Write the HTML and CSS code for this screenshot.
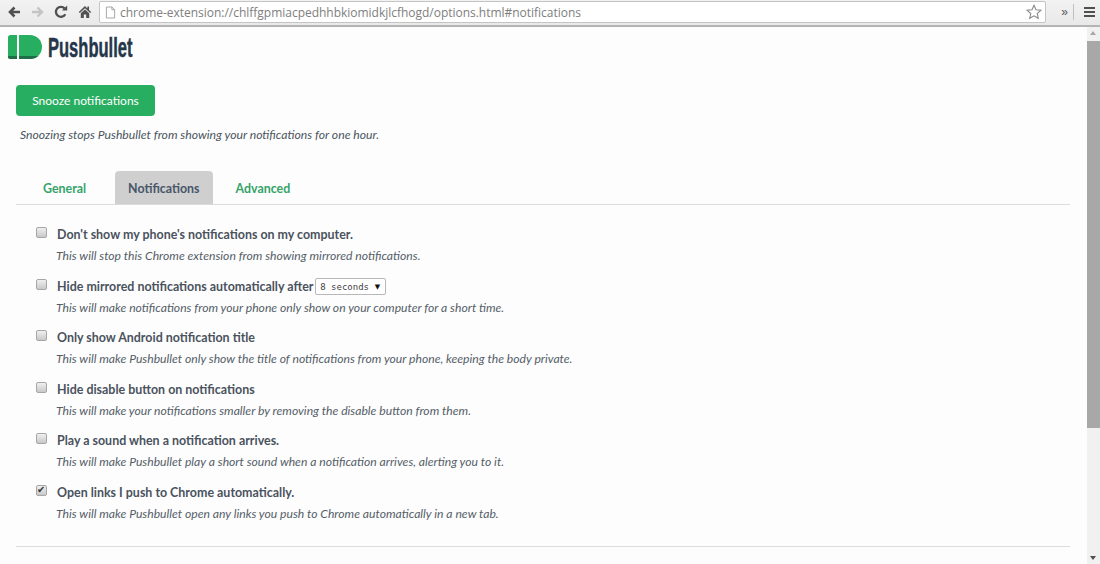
FILE: index.html
```html
<!DOCTYPE html>
<html lang="en">
<head>
<meta charset="utf-8">
<title>Pushbullet options</title>
<link rel="stylesheet" href="styles.css">
</head>
<body>
<header class="toolbar">
  <svg class="nav back" viewBox="0 0 14 14"><path d="M13 7H4M7.500 2.500 3 7l4.500 4.500" fill="none" stroke="#505050" stroke-width="2.600"/></svg>
  <svg class="nav forward" viewBox="0 0 14 14"><path d="M1 7h9M6.500 2.500 11 7l-4.500 4.500" fill="none" stroke="#c4c4c4" stroke-width="2.400"/></svg>
  <svg class="nav reload" viewBox="0 0 14 14"><path d="M11.300 9.200A5 5 0 1 1 10.600 3.400" fill="none" stroke="#505050" stroke-width="2.300"/><path d="M8 5.600h5.200V.6z" fill="#505050"/></svg>
  <svg class="nav home" viewBox="0 0 14 14"><path d="M7 1 .8 7l1 1L7 3.200 12.200 8l1-1-2.200-2.100V1.600H9.400v1.800zM2.800 8.300V13h3V9.400h2.400V13h3V8.300L7 4.500z" fill="#505050"/></svg>
  <div class="omnibox">
    <svg class="page-icon" viewBox="0 0 12 14"><path d="M1.500 1h6l3 3v9h-9zM7.500 1v3h3" fill="#fff" stroke="#a0a0a0"/></svg>
    <span class="url">chrome-extension://chlffgpmiacpedhhbkiomidkjlcfhogd/options.html#notifications</span>
    <svg class="star" viewBox="0 0 16 16"><path d="m8 1.300 2 4.500 4.900.5-3.700 3.200 1.100 4.800L8 11.800l-4.300 2.500 1.100-4.800L1.100 6.300 6 5.800z" fill="#fff" stroke="#8a8a8a" stroke-width="1.100"/></svg>
  </div>
  <span class="chevrons">»</span>
  <span class="divider"></span>
  <span class="menu"><i></i><i></i><i></i></span>
</header>
<div class="viewport">
  <main class="page">
    <div class="logo">
      <svg class="logo-mark" viewBox="0 0 34 24"><path d="M0 2.500A2.500 2.500 0 0 1 2.500 0H9v24H2.500A2.500 2.500 0 0 1 0 21.500z" fill="#27ae60"/><path d="M11 0h11a12 12 0 0 1 0 24H11z" fill="#27ae60"/><path d="M0 21h9v3H2.500A2.500 2.500 0 0 1 0 21.500zM11 21h19.500a12 12 0 0 1-8.500 3H11z" fill="#1e6f48"/></svg>
      <span class="logo-word">Pushbullet</span>
    </div>
    <button class="snooze" type="button">Snooze notifications</button>
    <p class="snooze-note">Snoozing stops Pushbullet from showing your notifications for one hour.</p>
    <nav class="tabs">
      <a class="tab">General</a>
      <a class="tab active">Notifications</a>
      <a class="tab">Advanced</a>
    </nav>
    <section class="options">
      <div class="option">
        <input type="checkbox">
        <div class="option-body">
          <div class="title">Don't show my phone's notifications on my computer.</div>
          <div class="desc">This will stop this Chrome extension from showing mirrored notifications.</div>
        </div>
      </div>
      <div class="option">
        <input type="checkbox">
        <div class="option-body">
          <div class="title">Hide mirrored notifications automatically after <span class="select">8 seconds<b>▼</b></span></div>
          <div class="desc">This will make notifications from your phone only show on your computer for a short time.</div>
        </div>
      </div>
      <div class="option">
        <input type="checkbox">
        <div class="option-body">
          <div class="title">Only show Android notification title</div>
          <div class="desc">This will make Pushbullet only show the title of notifications from your phone, keeping the body private.</div>
        </div>
      </div>
      <div class="option">
        <input type="checkbox">
        <div class="option-body">
          <div class="title">Hide disable button on notifications</div>
          <div class="desc">This will make your notifications smaller by removing the disable button from them.</div>
        </div>
      </div>
      <div class="option">
        <input type="checkbox">
        <div class="option-body">
          <div class="title">Play a sound when a notification arrives.</div>
          <div class="desc">This will make Pushbullet play a short sound when a notification arrives, alerting you to it.</div>
        </div>
      </div>
      <div class="option">
        <input type="checkbox" checked>
        <div class="option-body">
          <div class="title">Open links I push to Chrome automatically.</div>
          <div class="desc">This will make Pushbullet open any links you push to Chrome automatically in a new tab.</div>
        </div>
      </div>
    </section>
    <hr class="rule">
  </main>
  <aside class="scrollbar">
    <span class="arrow up"></span>
    <span class="thumb"></span>
    <span class="arrow down"></span>
  </aside>
</div>
</body>
</html>
```
FILE: styles.css
```css
* { box-sizing: border-box; }
html, body { margin: 0; height: 564px; overflow: hidden; }
body { font-family: Lato, "Open Sans", sans-serif; background: #fdfdfd; color: #414b56; }

.toolbar { height: 27px; display: flex; align-items: center; padding: 0 5px 1px 7px; background: linear-gradient(#f2f2f2, #e9e9e9); border-bottom: 2px solid #b4b4b4; }
.nav { width: 14px; height: 14px; flex: none; }
.forward { margin-left: 10px; }
.reload { margin-left: 9px; }
.home { margin-left: 10px; }
.omnibox { flex: 1; height: 22px; margin-left: 7px; display: flex; align-items: center; padding: 0 3px 0 5px; background: #fff; border: 1px solid #c4c4c4; border-radius: 2px; min-width: 0; }
.page-icon { width: 11px; height: 13px; flex: none; }
.url { flex: 1; margin-left: 4px; font-size: 12px; color: #7e7e7e; white-space: nowrap; font-family: "Open Sans", sans-serif; letter-spacing: -.02px; }
.star { width: 16px; height: 16px; flex: none; }
.chevrons { width: 27px; text-align: center; font: 12px "Liberation Sans", sans-serif; color: #555; padding-left: 10px; }
.divider { width: 1px; height: 16px; background: #c0c0c0; margin-right: 10px; }
.menu { width: 11px; display: flex; flex-direction: column; gap: 2px; }
.menu i { height: 2px; background: #505050; display: block; }

.viewport { height: 537px; display: flex; }
.page { flex: 1; min-width: 0; padding: 6px 17px 0 16px; }

.logo { display: flex; align-items: center; height: 30px; margin-left: -8px; gap: 6px; }
.logo-mark { width: 34px; height: 24px; flex: none; margin-top: -3px; }
.logo-word { flex: none; font: 700 28px/26px "Liberation Sans", sans-serif; color: #25364a; -webkit-text-stroke: .5px #25364a; transform: scaleX(.59); transform-origin: left center; margin-top: -1px; white-space: nowrap; }

.snooze { display: block; width: 139px; height: 31px; margin-top: 22px; padding: 0; background: #27ae60; color: #fff; border: 0; border-radius: 4px; font: 400 12px Lato, sans-serif; }
.snooze-note { margin: 11px 0 0 4px; font-size: 12.200px; line-height: 16px; font-style: italic; color: #4a5560; }

.tabs { display: flex; margin-top: 28px; height: 34px; border-bottom: 1px solid #dcdcdc; }
.tab { height: 33px; display: flex; align-items: center; padding: 1px 13px 0; font-size: 12.400px; font-weight: 700; color: #34a368; border-radius: 4px 4px 0 0; margin-right: 10px; }
.tab:first-child { margin-left: 14px; margin-right: 16px; }
.tab.active { background: #cfcfcf; color: #47566a; }

.options { padding: 19px 0 0 20px; }
.option { display: flex; height: 51.500px; }
.option input { appearance: none; width: 11px; height: 11px; margin: 3px 10px 0 0; flex: none; position: relative; background: linear-gradient(#f0f0f0, #c8c8c8); border: 1px solid #a6a6a6; border-radius: 2px; }
.option input:checked::after { content: "✔"; position: absolute; left: 0; top: -2px; font: 10px/12px "DejaVu Sans", sans-serif; color: #333; }
.option-body { min-width: 0; padding-left: 0; }
.title { font-size: 12.450px; font-weight: 700; line-height: 21px; height: 21px; color: #4a535d; white-space: nowrap; }
.desc { margin: 3px 0 0 -1px; font-size: 12.170px; font-style: italic; line-height: 16px; color: #555e68; white-space: nowrap; }
.select { display: inline-flex; align-items: center; justify-content: space-between; width: 71px; height: 17px; padding: 0 5px 0 4px; margin-left: -1px; vertical-align: 1px; background: #fff; border: 1px solid #b8b8b8; border-radius: 2px; font: 400 9px "DejaVu Sans Mono", monospace; color: #444; }
.select b { font: 7px "DejaVu Sans", sans-serif; color: #111; }

.rule { margin: 13px 0 0; height: 0; border: 0; border-top: 1px solid #dcdcdc; }

.scrollbar { width: 13px; flex: none; background: #f1f1f1; position: relative; }
.thumb { position: absolute; left: 0; right: 0; top: 14px; height: 387px; background: #a8a8a8; }
.arrow { position: absolute; left: 3px; width: 0; height: 0; border-left: 3.500px solid transparent; border-right: 3.500px solid transparent; }
.arrow.up { top: 4px; border-bottom: 4px solid #a8a8a8; }
.arrow.down { bottom: 4px; border-top: 4px solid #505050; }
```
